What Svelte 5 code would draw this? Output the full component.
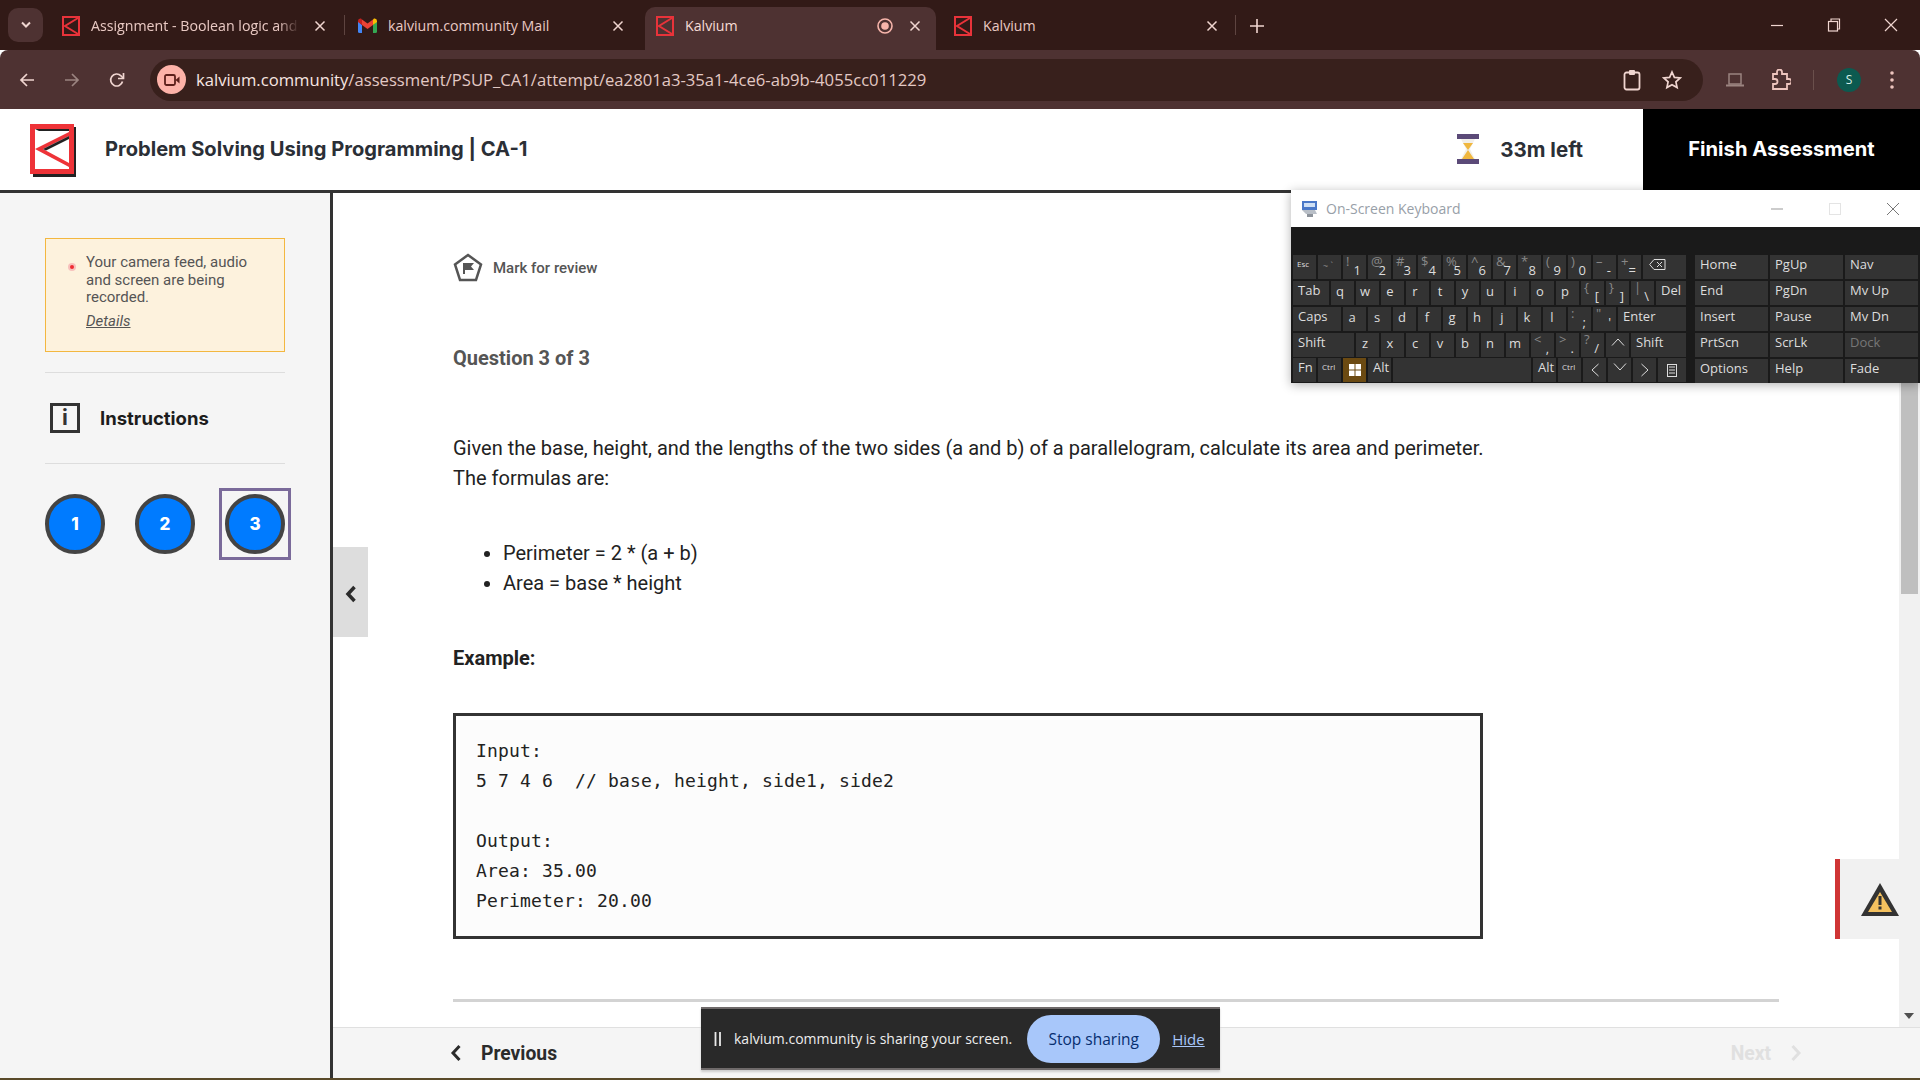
<script>
  const keyRows = [
    [
      { tiny: 'Esc' }, { dim: '~ `' }, { up: '!', lo: '1' }, { up: '@', lo: '2' }, { up: '#', lo: '3' }, { up: '$', lo: '4' },
      { up: '%', lo: '5' }, { up: '^', lo: '6' }, { up: '&', lo: '7' }, { up: '*', lo: '8' }, { up: '(', lo: '9' }, { up: ')', lo: '0' },
      { up: '–', lo: '-' }, { up: '+', lo: '=' }, { icon: 'back', w: 43 }
    ],
    [
      { text: 'Tab', w: 36 }, ...'qwertyuiop'.split('').map((c) => ({ ch: c })),
      { up: '{', lo: '[' }, { up: '}', lo: ']' }, { up: '|', lo: '\\' }, { text: 'Del', w: 30 }
    ],
    [
      { text: 'Caps', w: 48 }, ...'asdfghjkl'.split('').map((c) => ({ ch: c })),
      { up: ':', lo: ';' }, { up: '"', lo: "'" }, { text: 'Enter', w: 68 }
    ],
    [
      { text: 'Shift', w: 61 }, ...'zxcvbnm'.split('').map((c) => ({ ch: c })),
      { up: '<', lo: ',' }, { up: '>', lo: '.' }, { up: '?', lo: '/' }, { icon: 'up' }, { text: 'Shift', w: 55 }
    ],
    [
      { text: 'Fn' }, { tiny: 'Ctrl' }, { icon: 'win', win: true }, { text: 'Alt' }, { text: ' ', w: 138 }, { text: 'Alt' },
      { tiny: 'Ctrl' }, { icon: 'left' }, { icon: 'down' }, { icon: 'right' }, { icon: 'menu', w: 28 }
    ]
  ];

  const navKeys = ['Home', 'PgUp', 'Nav', 'End', 'PgDn', 'Mv Up', 'Insert', 'Pause', 'Mv Dn', 'PrtScn', 'ScrLk', 'Dock', 'Options', 'Help', 'Fade'];

  const tabs = [
    { title: 'Assignment - Boolean logic and', fav: 'k', width: 293, left: 11, right: 18, fade: true },
    { title: 'kalvium.community Mail', fav: 'm', width: 301, left: 14, right: 21 },
    { title: 'Kalvium', fav: 'k', width: 291, left: 11, right: 15, active: true, rec: true },
    { title: 'Kalvium', fav: 'k', width: 293, left: 11, right: 18, gap: 7 }
  ];

  const questions = [1, 2, 3];
  const current = 3;

  const code = `Input:
5 7 4 6  // base, height, side1, side2

Output:
Area: 35.00
Perimeter: 20.00`;
</script>

<div class="page">
  <div class="tabstrip">
    <button class="tabsearch" aria-label="Search tabs">
      <svg width="12" height="8" viewBox="0 0 12 8"><path d="M2 1.500 6 5.500 10 1.500" fill="none" stroke="#f0d5d0" stroke-width="2"/></svg>
    </button>
    <div class="tabs">
      {#each tabs as t}
        <div class="tab" class:active={t.active} style:width="{t.width}px" style:padding-left="{t.left}px" style:padding-right="{t.right}px" style:margin-left="{t.gap ?? 0}px">
          {#if t.fav === 'k'}
            <svg class="fav" width="18" height="20" viewBox="0 0 18 20">
              <rect x="1" y="1" width="16" height="18" fill="none" stroke="#e8333a" stroke-width="2"/>
              <path d="M16 2 3 10 16 18" fill="none" stroke="#e8333a" stroke-width="2"/>
            </svg>
          {:else}
            <svg class="fav" width="19" height="15" viewBox="0 0 19 15">
              <path d="M0 3v10.500q0 1.500 1.500 1.500H4V7z" fill="#4285f4"/>
              <path d="M19 3v10.500q0 1.500-1.500 1.500H15V7z" fill="#34a853"/>
              <path d="M4 7 9.500 11 15 7V1.500L9.500 5.500 4 1.500z" fill="#ea4335"/>
              <path d="M0 3q0-3 3-2.500L4 1.500V7L0 4z" fill="#c5221f"/>
              <path d="M19 3q0-3-3-2.500L15 1.500V7l4-3z" fill="#fbbc04"/>
            </svg>
          {/if}
          <span class="tabtitle" class:fade={t.fade}>{t.title}</span>
          {#if t.rec}
            <svg class="rec" width="16" height="16" viewBox="0 0 16 16"><circle cx="8" cy="8" r="7" fill="none" stroke="#f7b5ab" stroke-width="1.600"/><circle cx="8" cy="8" r="3.800" fill="#f7b5ab"/></svg>
          {/if}
          <svg class="tabclose" width="12" height="12" viewBox="0 0 12 12"><path d="M1.500 1.500 10.500 10.500M10.500 1.500 1.500 10.500" stroke="#f0d5d0" stroke-width="1.500"/></svg>
        </div>
      {/each}
      <svg class="plus" width="14" height="14" viewBox="0 0 14 14"><path d="M7 0v14M0 7h14" stroke="#f0d5d0" stroke-width="1.600"/></svg>
    </div>
    <div class="winctl">
      <svg width="14" height="14" viewBox="0 0 14 14"><path d="M1 7.500h12" stroke="#f0d5d0" stroke-width="1.200"/></svg>
      <svg width="14" height="14" viewBox="0 0 14 14"><rect x="1.500" y="3.500" width="9" height="9.500" fill="none" stroke="#f0d5d0" stroke-width="1.200"/><path d="M4 3.500V1h8.500v10h-2" fill="none" stroke="#f0d5d0" stroke-width="1.200"/></svg>
      <svg width="14" height="14" viewBox="0 0 14 14"><path d="M1 1 13 13M13 1 1 13" stroke="#f0d5d0" stroke-width="1.200"/></svg>
    </div>
  </div>

  <div class="toolbar">
    <svg class="nav-ic" width="16" height="16" viewBox="0 0 16 16"><path d="M15 8H2M8 2 2 8l6 6" fill="none" stroke="#f0d5d0" stroke-width="1.700"/></svg>
    <svg class="nav-ic" width="16" height="16" viewBox="0 0 16 16"><path d="M1 8h13M8 2l6 6-6 6" fill="none" stroke="#9b8480" stroke-width="1.700"/></svg>
    <svg class="nav-ic" width="16" height="16" viewBox="0 0 16 16"><path d="M13.500 9.500A6 6 0 1 1 12 3.800L14 6" fill="none" stroke="#f0d5d0" stroke-width="1.700"/><path d="M14.500 1v5.500H9" fill="none" stroke="#f0d5d0" stroke-width="1.700"/></svg>
    <div class="omnibox">
      <span class="camdot">
        <svg width="16" height="12" viewBox="0 0 16 12"><rect x="1" y="1" width="10" height="10" rx="1.500" fill="none" stroke="#5d1f1a" stroke-width="1.800"/><path d="M11.500 6 15.500 2.500v7z" fill="#5d1f1a"/></svg>
      </span>
      <span class="url">kalvium.community<span class="urlpath">/assessment/PSUP_CA1/attempt/ea2801a3-35a1-4ce6-ab9b-4055cc011229</span></span>
      <svg class="omni-ic" width="18" height="22" viewBox="0 0 18 22"><rect x="1.500" y="3.500" width="15" height="17" rx="2" fill="none" stroke="#f0d5d0" stroke-width="1.800"/><rect x="6" y="1" width="6" height="5" rx="1" fill="#f0d5d0"/></svg>
      <svg class="omni-ic star" width="20" height="20" viewBox="0 0 20 20"><path d="M10 2l2.400 5.400 5.800.6-4.300 3.900 1.200 5.700L10 14.700l-5.100 2.900 1.200-5.700L1.800 8l5.800-.6z" fill="none" stroke="#f0d5d0" stroke-width="1.700"/></svg>
    </div>
    <div class="tool-right">
      <svg width="18" height="16" viewBox="0 0 18 16"><rect x="3" y="2" width="12" height="10" fill="none" stroke="#9b8480" stroke-width="1.500"/><rect x="0" y="12.500" width="18" height="2" fill="#9b8480"/></svg>
      <svg class="puzzle" width="20" height="22" viewBox="0 0 20 22"><path d="M2 5h4V3a2.500 2.500 0 0 1 5 0v2h5v5h2a2.500 2.500 0 0 1 0 5h-2v5H2v-5h2a2.500 2.500 0 0 0 0-5H2z" fill="none" stroke="#eec5be" stroke-width="1.800"/></svg>
      <span class="tool-sep"></span>
      <span class="avatar">S</span>
      <svg class="dots" width="4" height="18" viewBox="0 0 4 18"><circle cx="2" cy="2" r="1.800" fill="#eec5be"/><circle cx="2" cy="9" r="1.800" fill="#eec5be"/><circle cx="2" cy="16" r="1.800" fill="#eec5be"/></svg>
    </div>
  </div>

  <header class="apphead">
    <svg class="logo" width="46" height="53" viewBox="0 0 46 53">
      <rect x="3" y="3" width="43" height="50" fill="#222"/>
      <rect x="0" y="0" width="44" height="50" fill="#ee3338"/>
      <rect x="5" y="5" width="34" height="40" fill="#fff"/>
      <path d="M5 5h34v2L9 7z" fill="#222"/>
      <path d="M39 8 5 25l34 18v-4L13 25l26-13z" fill="#ee3338"/>
      <path d="M39 12 13 25l3 1.500L39 15z" fill="#222"/>
    </svg>
    <h1 class="title">Problem Solving Using Programming | CA-1</h1>
    <div class="timer">
      <svg width="22" height="30" viewBox="0 0 22 30">
        <rect x="0" y="0" width="22" height="5" fill="#5b4a78"/>
        <rect x="0" y="25" width="22" height="5" fill="#5b4a78"/>
        <path d="M4 5h14l-5 10 5 10H4l5-10z" fill="#f2efe9"/>
        <path d="M6 9h10l-5 7zM11 16l6 9H5z" fill="#f0b73f"/>
      </svg>
      <span>33m left</span>
    </div>
    <button class="finish">Finish Assessment</button>
  </header>

  <div class="body">
    <aside class="side">
      <div class="notice">
        <span class="recdot"></span>
        <div>
          <p>Your camera feed, audio and screen are being recorded.</p>
          <em>Details</em>
        </div>
      </div>
      <div class="instr">
        <span class="info">i</span>
        <span class="instr-label">Instructions</span>
      </div>
      <div class="qnav">
        {#each questions as q}
          <div class="qcell" class:current={q === current}>
            <span class="qdot">{q}</span>
          </div>
        {/each}
      </div>
    </aside>

    <main class="main">
      <div class="scroller">
        <button class="collapse" aria-label="Collapse">
          <svg width="12" height="18" viewBox="0 0 12 18"><path d="M9.500 2 3 9l6.500 7" fill="none" stroke="#2b2b2b" stroke-width="3.500"/></svg>
        </button>
        <div class="content">
          <div class="mark">
            <svg width="30" height="30" viewBox="0 0 30 30">
              <path d="M15 2 28 11.500 23 27H7L2 11.500z" fill="none" stroke="#555" stroke-width="2.500"/>
              <path d="M10 21V10h11l-3 3.500 3 3.500h-9v4z" fill="#555"/>
            </svg>
            <span>Mark for review</span>
          </div>
          <div class="qno">Question 3 of 3</div>
          <p class="para">Given the base, height, and the lengths of the two sides (a and b) of a parallelogram, calculate its area and perimeter.<br />The formulas are:</p>
          <ul class="formulas">
            <li>Perimeter = 2 * (a + b)</li>
            <li>Area = base * height</li>
          </ul>
          <p class="example">Example:</p>
          <pre class="codebox">{code}</pre>
          <hr class="rule" />
        </div>
        <div class="scrollbar">
          <div class="thumb"></div>
          <svg class="arrow" width="10" height="6" viewBox="0 0 10 6"><path d="M0 0h10L5 6z" fill="#505050"/></svg>
        </div>
        <div class="warnflag">
          <svg width="38" height="33" viewBox="0 0 38 33">
            <path d="M19 0 38 33H0z" fill="#333"/>
            <path d="M19 9 31 29H7z" fill="#f4c15f"/>
            <rect x="17.500" y="13" width="3" height="9" fill="#333"/>
            <rect x="17.500" y="23.500" width="3" height="3" fill="#333"/>
          </svg>
        </div>
      </div>
      <footer class="foot">
        <div class="prev">
          <svg width="12" height="18" viewBox="0 0 12 18"><path d="M9.500 2 3 9l6.500 7" fill="none" stroke="#2b2b2b" stroke-width="3"/></svg>
          <span>Previous</span>
        </div>
        <div class="next">
          <span>Next</span>
          <svg width="12" height="18" viewBox="0 0 12 18"><path d="M2.500 2 9 9l-6.500 7" fill="none" stroke="#e0e0e0" stroke-width="3"/></svg>
        </div>
      </footer>
    </main>
  </div>
  <div class="taskbar"></div>

  <div class="osk">
    <div class="osk-title">
      <svg width="18" height="18" viewBox="0 0 18 18">
        <rect x="1" y="1" width="15" height="9" fill="#4a78c8"/>
        <rect x="3" y="3" width="11" height="4" fill="#cfe0f5"/>
        <path d="M1 10h13l2 4H5z" fill="#b9bfc7"/>
        <rect x="6" y="14" width="6" height="3" fill="#8d939b"/>
      </svg>
      <span class="osk-name">On-Screen Keyboard</span>
      <div class="osk-ctl">
        <svg width="14" height="14" viewBox="0 0 14 14"><path d="M1 7h12" stroke="#999" stroke-width="1"/></svg>
        <svg width="14" height="14" viewBox="0 0 14 14"><rect x="1.500" y="1.500" width="11" height="11" fill="none" stroke="#e4e4e4"/></svg>
        <svg width="14" height="14" viewBox="0 0 14 14"><path d="M1 1 13 13M13 1 1 13" stroke="#777" stroke-width="1"/></svg>
      </div>
    </div>
    <div class="osk-body">
      <div class="keys">
        {#each keyRows as row}
          <div class="keyrow">
            {#each row as k}
              <div class="key" class:win={k.win} class:letter={k.ch || k.icon} class:ch={k.ch} style:width="{k.w ?? 23}px">
                {#if k.up}
                  <span class="k-up">{k.up}</span><span class="k-lo">{k.lo}</span>
                {:else if k.tiny}
                  <span class="k-tiny">{k.tiny}</span>
                {:else if k.dim}
                  <span class="k-dim">{k.dim}</span>
                {:else if k.ch}
                  {k.ch}
                {:else if k.text}
                  <span class="k-text">{k.text}</span>
                {:else if k.icon === 'back'}
                  <svg class="ic-back" width="17" height="11" viewBox="0 0 17 11"><path d="M5 .5h11v10H5L.7 5.500z" fill="none" stroke="#ddd"/><path d="M8 3l5 5M13 3 8 8" stroke="#ddd"/></svg>
                {:else if k.icon === 'up'}
                  <svg class="ic-up" width="14" height="8" viewBox="0 0 14 8"><path d="M1 7.500 7 1l6 6.500" fill="none" stroke="#ddd"/></svg>
                {:else if k.icon === 'down'}
                  <svg class="ic-up" width="14" height="8" viewBox="0 0 14 8"><path d="M1 .5 7 7l6-6.500" fill="none" stroke="#ddd"/></svg>
                {:else if k.icon === 'left'}
                  <svg width="8" height="14" viewBox="0 0 8 14"><path d="M7.500 1 1 7l6.500 6" fill="none" stroke="#ddd"/></svg>
                {:else if k.icon === 'right'}
                  <svg width="8" height="14" viewBox="0 0 8 14"><path d="M.5 1 7 7 .5 13" fill="none" stroke="#ddd"/></svg>
                {:else if k.icon === 'menu'}
                  <svg width="10" height="13" viewBox="0 0 10 13"><rect x=".5" y=".5" width="9" height="12" fill="none" stroke="#ddd"/><path d="M2 3h6M2 6h6M2 9h6" stroke="#ddd"/></svg>
                {:else if k.icon === 'win'}
                  <svg width="12" height="12" viewBox="0 0 12 12"><path d="M0 0h5.500v5.500H0zM6.500 0H12v5.500H6.500zM0 6.500h5.500V12H0zM6.500 6.500H12V12H6.500z" fill="#fff"/></svg>
                {/if}
              </div>
            {/each}
          </div>
        {/each}
      </div>
      <div class="navkeys">
        {#each navKeys as n}
          <div class="navkey" class:off={n === 'Dock'}>{n}</div>
        {/each}
      </div>
    </div>
  </div>

  <div class="sharebar">
    <svg width="8" height="14" viewBox="0 0 8 14"><path d="M1.500 0v14M6 0v14" stroke="#e8e8e8" stroke-width="1.800"/></svg>
    <span class="sharetext">kalvium.community is sharing your screen.</span>
    <button class="stop">Stop sharing</button>
    <span class="hide">Hide</span>
  </div>
</div>

<style>
  :global(body) {
    margin: 0;
    overflow: hidden;
    font-family: Roboto, sans-serif;
  }
  button {
    border: 0;
    font-family: inherit;
    padding: 0;
  }
  p, h1, ul, pre {
    margin: 0;
  }
  .page {
    position: relative;
    width: 1920px;
    height: 1080px;
    display: flex;
    flex-direction: column;
    overflow: hidden;
    background: #fff;
  }

  /* browser chrome */
  .tabstrip {
    height: 50px;
    background: #321a17;
    display: flex;
    align-items: flex-end;
    flex-shrink: 0;
  }
  .tabsearch {
    width: 35px;
    height: 34px;
    margin: 0 8px 8px 8px;
    background: #4e3232;
    border-radius: 10px;
    display: flex;
    align-items: center;
    justify-content: center;
  }
  .tabs {
    display: flex;
    align-items: flex-end;
    height: 43px;
  }
  .tab {
    box-sizing: border-box;
    height: 43px;
    display: flex;
    align-items: center;
    padding-bottom: 6px;
    color: #e9c9c3;
    font: 14.200px "Open Sans", sans-serif;
    position: relative;
  }
  .tab:nth-child(2)::before, .tab:nth-child(4)::after {
    content: "";
    position: absolute;
    top: 8px;
    height: 20px;
    width: 1px;
    background: #5e4440;
  }
  .tab:nth-child(2)::before {
    left: 0;
  }
  .tab:nth-child(4)::after {
    right: 0;
  }
  .tab.active {
    background: #4e3232;
    border-radius: 10px 10px 0 0;
    color: #f7dcd6;
  }
  .fav {
    flex-shrink: 0;
    margin-right: 11px;
  }
  .tabtitle {
    flex: 1;
    white-space: nowrap;
    overflow: hidden;
    min-width: 0;
  }
  .tabtitle.fade {
    -webkit-mask-image: linear-gradient(90deg, #000 90%, transparent);
    mask-image: linear-gradient(90deg, #000 90%, transparent);
  }
  .rec {
    margin-right: 1px;
  }
  .tabclose {
    margin-left: 15px;
    flex-shrink: 0;
  }
  .plus {
    margin: 0 0 17px 14px;
  }
  .winctl {
    margin-left: auto;
    display: flex;
    gap: 43px;
    padding: 0 22px 18px 0;
    align-self: flex-end;
  }

  .toolbar {
    height: 59px;
    background: #4e3232;
    border-radius: 8px 8px 0 0;
    display: flex;
    align-items: center;
    flex-shrink: 0;
  }
  .nav-ic {
    margin-left: 19px;
    margin-right: 10px;
  }
  .omnibox {
    margin-left: 15px;
    width: 1553px;
    height: 42px;
    background: #38201c;
    border-radius: 21px;
    display: flex;
    align-items: center;
    box-sizing: border-box;
    padding: 0 21px 0 7px;
  }
  .camdot {
    width: 29px;
    height: 29px;
    border-radius: 50%;
    background: #fdb2a8;
    display: flex;
    align-items: center;
    justify-content: center;
    flex-shrink: 0;
  }
  .url {
    margin-left: 10px;
    color: #f7e6e2;
    font: 16.650px "Open Sans", sans-serif;
    white-space: nowrap;
    flex: 1;
  }
  .urlpath {
    color: #e3c9c4;
  }
  .omni-ic {
    margin-left: 21px;
  }
  .tool-right {
    display: flex;
    align-items: center;
    margin-left: 23px;
    flex: 1;
  }
  .puzzle {
    margin-left: 27px;
  }
  .tool-sep {
    width: 1px;
    height: 20px;
    background: #6a504c;
    margin-left: 22px;
  }
  .avatar {
    width: 24px;
    height: 24px;
    border-radius: 50%;
    background: #0c5a50;
    color: #d8efe9;
    font: 12px "Open Sans", sans-serif;
    display: flex;
    align-items: center;
    justify-content: center;
    margin-left: 23px;
  }
  .dots {
    margin-left: 29px;
  }

  /* app header */
  .apphead {
    height: 81px;
    border-bottom: 3px solid #333;
    display: flex;
    align-items: stretch;
    flex-shrink: 0;
    padding-left: 30px;
  }
  .logo {
    align-self: center;
    margin-top: 1px;
  }
  .title {
    align-self: center;
    margin: 0 0 1px 29px;
    font: 700 20.100px Inter, sans-serif;
    color: #2b2f36;
    flex: 1;
  }
  .timer {
    display: flex;
    align-items: center;
    gap: 21px;
    font: 700 20.500px Inter, sans-serif;
    color: #2b2f36;
    margin-right: 60px;
    padding-bottom: 1px;
  }
  .finish {
    width: 277px;
    padding-bottom: 2px;
    background: #000;
    color: #fff;
    font: 700 20.200px Inter, sans-serif;
  }

  /* sidebar */
  .body {
    flex: 1;
    display: flex;
    min-height: 0;
  }
  .side {
    box-sizing: border-box;
    width: 333px;
    flex-shrink: 0;
    background: #f5f5f5;
    border-right: 3px solid #333;
    padding: 45px 45px 0;
  }
  .notice {
    box-sizing: border-box;
    height: 114px;
    background: #fdf2dd;
    border: 1px solid #f3b73f;
    padding: 15px 20px 12px 20px;
    display: flex;
    align-items: flex-start;
    gap: 12px;
    color: #555;
    font-size: 15px;
    line-height: 17.600px;
  }
  .recdot {
    width: 4px;
    height: 4px;
    margin: 11px 0 0 4px;
    border-radius: 50%;
    background: #ef2b32;
    box-shadow: 0 0 0 2px #f7c0bc;
    flex-shrink: 0;
  }
  .notice em {
    display: block;
    margin-top: 6px;
    text-decoration: underline;
  }
  .instr {
    height: 90px;
    margin-top: 20px;
    border-top: 1px solid #ddd;
    border-bottom: 1px solid #ddd;
    display: flex;
    align-items: center;
    gap: 20px;
    padding-left: 5px;
  }
  .info {
    box-sizing: border-box;
    width: 30px;
    height: 30px;
    border: 3px solid #333;
    color: #333;
    font: 700 22px/24px Roboto, sans-serif;
    text-align: center;
  }
  .instr-label {
    font: 700 18.500px Inter, sans-serif;
    color: #1c1c1c;
  }
  .qnav {
    display: flex;
    gap: 30px;
    margin-top: 30px;
  }
  .qcell {
    position: relative;
  }
  .qcell.current::after {
    content: "";
    position: absolute;
    inset: -6px;
    border: 3px solid #7a6a9a;
  }
  .qdot {
    box-sizing: border-box;
    width: 60px;
    height: 60px;
    border: 4px solid #444;
    border-radius: 50%;
    background: #007bff;
    color: #fff;
    font: 800 17px Inter, sans-serif;
    display: flex;
    align-items: center;
    justify-content: center;
  }

  /* main */
  .main {
    flex: 1;
    min-width: 0;
    display: flex;
    flex-direction: column;
  }
  .scroller {
    position: relative;
    flex: 1;
    min-height: 0;
    display: flex;
  }
  .collapse {
    position: absolute;
    left: 0;
    top: 354px;
    width: 35px;
    height: 90px;
    padding-top: 3px;
    background: #ddd;
    display: flex;
    align-items: center;
    justify-content: center;
  }
  .content {
    flex: 1;
    min-width: 0;
    padding: 60px 120px 0;
    box-sizing: border-box;
    overflow: hidden;
  }
  .mark {
    display: flex;
    align-items: center;
    gap: 10px;
    height: 30px;
    font: 500 15px Roboto, sans-serif;
    color: #555;
  }
  .qno {
    margin-top: 63px;
    font: 700 20px/24px Roboto, sans-serif;
    color: #555;
  }
  .para {
    margin-top: 63px;
    white-space: nowrap;
    font-size: 20px;
    line-height: 30px;
    color: #222;
  }
  .formulas {
    margin-top: 45px;
    padding-left: 50px;
    font-size: 20px;
    line-height: 30px;
    color: #222;
  }
  .example {
    margin-top: 45px;
    font: 700 20px/30px Roboto, sans-serif;
    color: #222;
  }
  .codebox {
    box-sizing: border-box;
    margin-top: 40px;
    width: 1030px;
    height: 226px;
    padding: 20px 20px 18px;
    border: 3px solid #333;
    background: #fcfcfc;
    font: 18px/30px "DejaVu Sans Mono", monospace;
    letter-spacing: 0.160px;
    color: #222;
  }
  .rule {
    margin: 60px 0 0;
    width: 1326px;
    height: 3px;
    border: 0;
    background: #d3d3d3;
  }
  .scrollbar {
    position: relative;
    width: 21px;
    background: #f1f1f1;
    flex-shrink: 0;
  }
  .thumb {
    margin: 0 2px;
    height: 401px;
    background: #bfbfbf;
  }
  .arrow {
    position: absolute;
    left: 5px;
    bottom: 8px;
  }
  .warnflag {
    position: absolute;
    right: 21px;
    top: 666px;
    box-sizing: border-box;
    width: 64px;
    height: 80px;
    background: #f1f1f1;
    border-left: 5px solid #cf3535;
    display: flex;
    align-items: center;
    justify-content: flex-end;
  }
  .foot {
    height: 50px;
    background: #f5f5f5;
    border-top: 1px solid #e0e0e0;
    display: flex;
    align-items: center;
    justify-content: space-between;
    padding: 0 118px 0 117px;
    flex-shrink: 0;
  }
  .prev, .next {
    display: flex;
    align-items: center;
    gap: 19px;
    font: 700 19.300px Roboto, sans-serif;
  }
  .prev {
    color: #2b2b2b;
  }
  .next {
    color: #e0e0e0;
    gap: 19px;
  }
  .taskbar {
    height: 2px;
    background: #5a4a2a;
    flex-shrink: 0;
  }

  /* on-screen keyboard */
  .osk {
    position: absolute;
    left: 1291px;
    top: 190px;
    width: 629px;
    height: 193px;
    box-shadow: 0 2px 10px rgba(0, 0, 0, 0.3);
    display: flex;
    flex-direction: column;
    font-family: "Open Sans", sans-serif;
  }
  .osk-title {
    height: 37px;
    background: #fff;
    display: flex;
    align-items: center;
    padding-left: 10px;
  }
  .osk-name {
    margin-left: 7px;
    color: #98a0a8;
    font-size: 14px;
  }
  .osk-ctl {
    margin-left: auto;
    display: flex;
    gap: 44px;
    padding-right: 20px;
  }
  .osk-body {
    flex: 1;
    background: #1a1a1a;
    padding: 28px 0 0 2px;
    display: flex;
    gap: 9px;
  }
  .keys {
    display: flex;
    flex-direction: column;
    gap: 2px;
  }
  .keyrow {
    display: flex;
    gap: 2px;
  }
  .keyrow:last-child {
    margin-top: -1px;
  }
  .key {
    position: relative;
    box-sizing: border-box;
    height: 24px;
    background: #333;
    color: #ddd;
    font-size: 13px;
    line-height: 19px;
    padding-left: 5px;
  }
  .key.letter {
    padding-left: 0;
    text-align: center;
    display: flex;
    align-items: center;
    justify-content: center;
  }
  .key.ch {
    padding: 0 5px 3px 0;
  }
  .ic-back {
    margin: -6px 14px 0 0;
  }
  .ic-up {
    margin-bottom: 6px;
  }
  .key.win {
    background: #6b4a12;
  }
  .k-up {
    position: absolute;
    left: 3px;
    top: -3px;
    font-size: 13px;
    color: #888;
  }
  .k-lo {
    position: absolute;
    right: 5px;
    bottom: -1px;
    font-size: 13px;
  }
  .k-tiny {
    font-size: 8px;
    position: absolute;
    left: 4px;
    top: -1px;
  }
  .k-dim {
    font-size: 9px;
    color: #888;
  }
  .k-text {
    white-space: pre;
  }
  .navkeys {
    display: grid;
    grid-template-columns: 73px 73px 73px;
    grid-auto-rows: 24px;
    gap: 2px;
  }
  .navkey {
    background: #333;
    color: #ddd;
    font-size: 13px;
    line-height: 19px;
    padding-left: 5px;
    white-space: nowrap;
  }
  .navkey.off {
    color: #777;
  }

  /* screen share bar */
  .sharebar {
    position: absolute;
    left: 701px;
    top: 1007px;
    box-sizing: border-box;
    width: 519px;
    height: 63px;
    background: #292929;
    border-top: 2px solid #6f6a6a;
    border-bottom: 2px solid #6f6a6a;
    box-shadow: 0 2px 2px #ccc;
    display: flex;
    align-items: center;
    padding-left: 13px;
    font-family: "Open Sans", sans-serif;
    font-size: 14px;
  }
  .sharetext {
    margin-left: 12px;
    color: #eee;
    white-space: nowrap;
  }
  .stop {
    margin-left: 15px;
    width: 133px;
    height: 48px;
    border-radius: 24px;
    background: #a8c7fa;
    color: #062e6f;
    font-size: 15.500px;
    font-family: inherit;
  }
  .hide {
    margin-left: 12px;
    color: #a8c7fa;
    text-decoration: underline;
    font-size: 15px;
  }
</style>
